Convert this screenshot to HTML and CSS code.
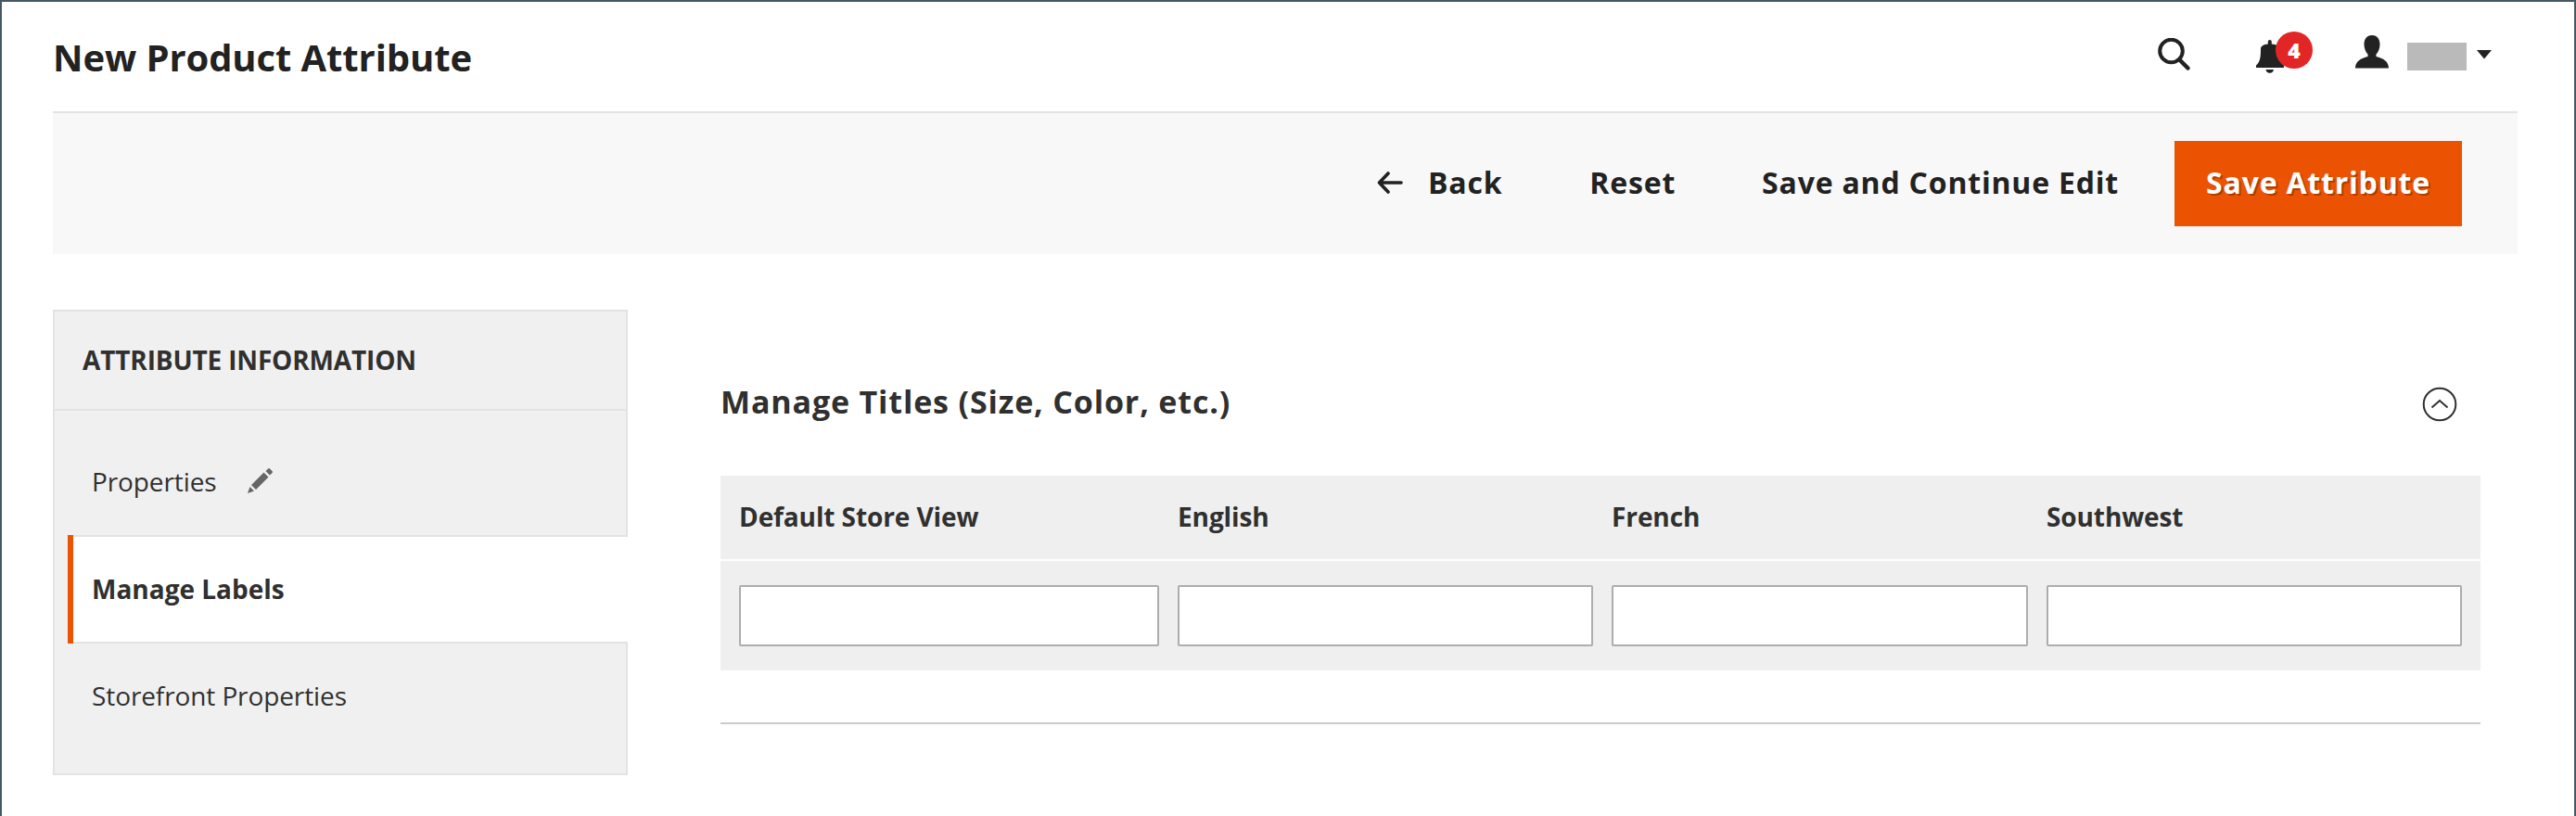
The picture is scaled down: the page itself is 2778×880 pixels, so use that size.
FILE: index.html
```html
<!DOCTYPE html>
<html lang="en">
<head>
<meta charset="utf-8">
<title>New Product Attribute</title>
<link rel="stylesheet" href="styles.css">
</head>
<body>
<div class="page">
  <header class="header">
    <h1 class="title">New Product Attribute</h1>
    <div class="tools">
      <svg class="search" width="36" height="36" viewBox="0 0 36 36" fill="none" stroke="currentColor"><circle cx="14.5" cy="14" r="12.3" stroke-width="4"/><path d="M23.5 23.5L32.500 32.500" stroke-width="4.500" stroke-linecap="round"/></svg>
      <div class="bell">
        <svg width="30" height="36" viewBox="0 0 30 36" fill="currentColor"><path d="M12.8 4.5V2a2 2 0 0 1 4 0v2.500C22 5 25 6.500 25 10C25 20 26 24 30 27.500V30H0V27.500C4 24 5 20 5 10C5 6.500 8 5 12.800 4.500ZM10.500 32h8.500a4.300 4.300 0 0 1-8.500 0Z"/></svg>
        <span class="badge">4</span>
      </div>
      <svg class="user" width="36" height="36" viewBox="0 0 36 36" fill="currentColor"><path d="M18 0C24 0 26.500 4.500 26.500 10C26.500 14.500 24.500 18.500 22.500 20.500V23C30 25 36 28 36 35.500H0C0 28 6 25 13.500 23V20.500C11.500 18.500 9.500 14.500 9.500 10C9.500 4.500 12 0 18 0Z"/></svg>
      <span class="username"></span>
      <svg class="caret" width="16" height="10" viewBox="0 0 16 10" fill="currentColor"><path d="M0 0H16L8 9.500Z"/></svg>
    </div>
  </header>
  <div class="toolbar">
    <button class="action back"><svg width="28" height="24" viewBox="0 0 28 24" fill="none" stroke="currentColor" stroke-width="3.600" stroke-linecap="round" stroke-linejoin="round"><path d="M26 12H3M12 2L2.500 12L12 22"/></svg>Back</button>
    <button class="action reset">Reset</button>
    <button class="action continue">Save and Continue Edit</button>
    <button class="action primary">Save Attribute</button>
  </div>
  <div class="columns">
    <nav class="side">
      <h2 class="side-title">ATTRIBUTE INFORMATION</h2>
      <ul class="tabs">
        <li class="tab">Properties<svg class="pencil" width="28" height="28" viewBox="0 0 28 28" fill="currentColor"><path d="M0 28L2.500 21L7 25.500ZM4 19L17.500 5.500L22.500 10.500L9 24ZM19.500 4L22 1.500Q23 .500 24 1.500L26.500 4Q27.500 5 26.500 6L24 8.500Z"/></svg></li>
        <li class="tab active">Manage Labels</li>
        <li class="tab last">Storefront Properties</li>
      </ul>
    </nav>
    <main class="main">
      <div class="section-head">
        <h2 class="section-title">Manage Titles (Size, Color, etc.)</h2>
        <svg width="38" height="38" viewBox="0 0 38 38" fill="none" stroke="currentColor" stroke-width="2"><circle cx="19" cy="19" r="17.300"/><path d="M10.500 22.500L19 15L27.500 22.500"/></svg>
      </div>
      <div class="grid labels">
        <span>Default Store View</span><span>English</span><span>French</span><span>Southwest</span>
      </div>
      <div class="grid fields">
        <input class="field" type="text"><input class="field" type="text"><input class="field" type="text"><input class="field" type="text">
      </div>
      <hr class="rule">
    </main>
  </div>
</div>
</body>
</html>
```
FILE: styles.css
```css
* { box-sizing: border-box; }
body { margin: 0; background: #fff; }
.page {
  height: 880px;
  overflow: hidden;
  padding: 0 61px 0 55px;
  border: 2px solid #465962;
  border-bottom: 0;
  font-family: "Open Sans", "Noto Sans", sans-serif;
  font-size: 28px;
  color: #303030;
}
h1, h2, ul { margin: 0; padding: 0; }
.header {
  display: flex;
  align-items: center;
  justify-content: space-between;
  height: 120px;
  border-bottom: 2px solid #e3e3e3;
  color: #222;
}
.title { padding-top: 2px; font-size: 40px; font-weight: 700; line-height: 54px; letter-spacing: -.1px; }
.tools { display: flex; align-items: flex-start; height: 84px; padding: 17px 28px 0 0; }
.tools svg { display: block; }
.search { margin: 5px 70px 0 0; }
.bell { position: relative; width: 30px; margin: 7px 77px 0 0; }
.badge {
  position: absolute;
  left: 21px;
  top: -9px;
  width: 40px;
  height: 40px;
  border-radius: 50%;
  background: #e22626;
  color: #fff;
  font-size: 23px;
  font-weight: 800;
  line-height: 40px;
  text-align: center;
}
.user { margin: 2px 20px 0 0; }
.username { width: 64px; height: 30px; margin: 10px 11px 0 0; background: #bababa; }
.caret { margin-top: 18px; }
.toolbar {
  display: flex;
  justify-content: flex-end;
  align-items: center;
  height: 152px;
  padding-right: 60px;
  background: #f8f8f8;
}
.action {
  display: flex;
  align-items: center;
  height: 92px;
  padding: 0 0 3px;
  border: 0;
  background: none;
  font: 700 32px/44px "Open Sans", "Noto Sans", sans-serif;
  letter-spacing: .8px;
  color: #222;
}
.back { gap: 27px; margin-right: 94px; }
.reset { margin-right: 93px; }
.continue { margin-right: 60px; }
.primary {
  width: 310px;
  justify-content: center;
  background: #eb5202;
  color: #fff;
  text-shadow: 2px 2px 0 rgba(0, 0, 0, .25);
}
.columns { display: flex; gap: 100px; margin-top: 60px; }
.side {
  width: 620px;
  height: 502px;
  border: 2px solid #e3e3e3;
  background: #f0f0f0;
}
.side-title {
  height: 107px;
  padding-left: 30px;
  border-bottom: 2px solid #e3e3e3;
  font-size: 28px;
  font-weight: 700;
  line-height: 105px;
  letter-spacing: -.15px;
}
.tabs { padding-top: 19px; list-style: none; }
.tab {
  display: flex;
  align-items: center;
  height: 115px;
  padding: 0 0 1px 40px;
  letter-spacing: -.1px;
}
.last { padding-bottom: 0; }
.active {
  height: 117px;
  margin: 0 -2px -2px 14px;
  padding-left: 26px;
  background: linear-gradient(#eb5202, #eb5202) left / 6px 100% no-repeat,
    linear-gradient(#e3e3e3, #e3e3e3) top / 100% 2px no-repeat,
    linear-gradient(#e3e3e3, #e3e3e3) bottom / 100% 2px no-repeat, #fff;
  font-weight: 700;
  letter-spacing: 0;
}
.pencil { margin-left: 33px; margin-top: -2px; color: #666; }
.main { width: 1898px; padding-top: 76px; }
.section-head {
  display: flex;
  justify-content: space-between;
  height: 103px;
  padding-right: 25px;
}
.section-title { font-size: 34px; font-weight: 700; line-height: 46px; letter-spacing: .85px; }
.section-head svg { margin-top: 7px; }
.grid {
  display: grid;
  grid-template-columns: 453px 448px 449px 448px;
  column-gap: 20px;
  padding: 0 20px;
  background: #efefef;
  align-items: center;
}
.labels { height: 90px; padding-bottom: 2px; font-weight: 700; letter-spacing: -.1px; }
.fields { height: 118px; margin-top: 2px; }
.field {
  width: 100%;
  height: 66px;
  margin: 0;
  padding: 0 18px;
  border: 2px solid #adadad;
  border-radius: 2px;
  background: #fff;
  font: inherit;
}
.rule { height: 2px; margin: 56px 0 0; border: 0; background: #ccc; }
```
